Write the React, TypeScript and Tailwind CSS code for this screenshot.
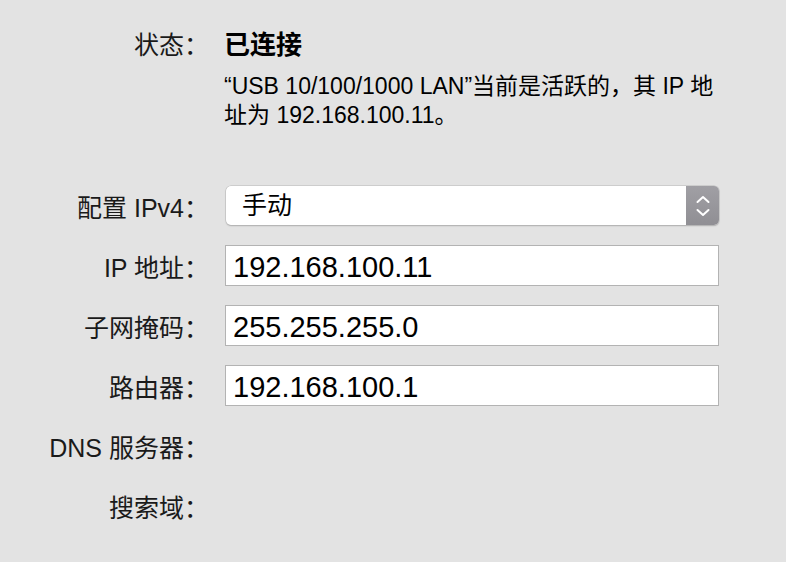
import React from "react";

const font = { fontFamily: '"Liberation Sans", "Noto Sans CJK SC", sans-serif' };

const Field = ({ value }: { value: string }) => (
  <div className="h-[41px] w-[494px] border border-[#b3b3b3] bg-white pl-[7px] pt-[3px] text-[29px] leading-[36px] text-black">
    {value}
  </div>
);

const Label = ({ children }: { children: React.ReactNode }) => (
  <div className="h-[41px] w-[209px] shrink-0 whitespace-nowrap pt-[5px] text-right text-[25px] leading-[36px] text-[#1a1a1a]">
    {children}
  </div>
);

const App = () => {
  return (
    <div className="h-[562px] w-[786px] overflow-hidden bg-[#e3e3e3] pt-[29px]" style={font}>
      <div className="flex">
        <div className="w-[209px] shrink-0 text-right text-[25px] leading-[32px] text-[#1a1a1a]">状态：</div>
        <div className="ml-[15px] flex flex-col">
          <div className="text-[26px] font-bold leading-[32px] text-black">已连接</div>
          <div className="mt-[11px] whitespace-nowrap text-[23px] leading-[29px] text-black">
            “USB 10/100/1000 LAN”当前是活跃的，其 IP 地
            <br />
            址为 192.168.100.11。
          </div>
        </div>
      </div>

      <div className="mt-[55px] flex flex-col gap-[19px]">
        <div className="flex h-[41px] items-center">
          <Label>配置 IPv4：</Label>
          <div className="ml-[17px] flex h-[39px] w-[493px] overflow-hidden rounded-[5px] bg-white shadow-[0_0_0_0.5px_#b8b8b8,0_1px_1.5px_rgba(0,0,0,0.25)]">
            <div className="flex-1 pl-[16px] text-[25px] leading-[39px] text-black">手动</div>
            <div className="flex w-[33px] items-center justify-center bg-gradient-to-b from-[#a09fa4] to-[#908f94]">
              <svg width="16" height="26" viewBox="0 0 16 26" fill="none" stroke="white" strokeWidth="2" strokeLinecap="round" strokeLinejoin="round">
                <path d="M2.5 9 L8 4 L13.5 9" />
                <path d="M2.5 17 L8 22 L13.5 17" />
              </svg>
            </div>
          </div>
        </div>
        <div className="flex">
          <Label>IP 地址：</Label>
          <div className="ml-[16px]">
            <Field value="192.168.100.11" />
          </div>
        </div>
        <div className="flex">
          <Label>子网掩码：</Label>
          <div className="ml-[16px]">
            <Field value="255.255.255.0" />
          </div>
        </div>
        <div className="flex">
          <Label>路由器：</Label>
          <div className="ml-[16px]">
            <Field value="192.168.100.1" />
          </div>
        </div>
        <div className="flex h-[41px]">
          <Label>DNS 服务器：</Label>
        </div>
        <div className="flex h-[41px]">
          <Label>搜索域：</Label>
        </div>
      </div>
    </div>
  );
};

export default App;
